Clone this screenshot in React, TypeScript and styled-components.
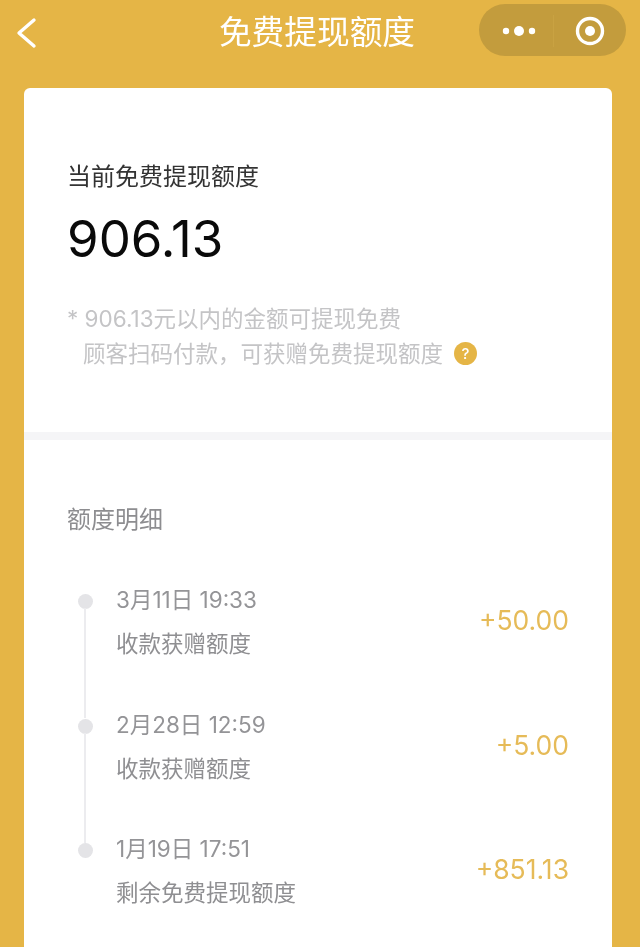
import React from "react";
import styled, { createGlobalStyle } from "styled-components";

const FONT = `Inter, "Noto Sans CJK SC", sans-serif`;
const GOLD = "#e5b546";
const NOTE_TEXT = "顾客扫码付款\uFF0C可获赠免费提现额度";

const Global = createGlobalStyle`
  html, body { margin: 0; padding: 0; background: ${GOLD}; }
  * { box-sizing: border-box; }
`;

const Page = styled.div`
  width: 640px;
  height: 947px;
  overflow: hidden;
  display: flex;
  flex-direction: column;
  background: ${GOLD};
  font-family: ${FONT};
  filter: blur(0.45px);
`;

const NavBar = styled.header`
  height: 88px;
  flex: none;
  display: grid;
  grid-template-columns: 1fr auto 1fr;
  align-items: start;
  padding: 4px 14px 0 16px;
`;

const BackButton = styled.div`
  height: 58px;
  display: flex;
  align-items: center;
  color: #fff;
`;

const Title = styled.h1`
  margin: 0;
  font-size: 32.7px;
  line-height: 57px;
  font-weight: 400;
  color: #fff;
  transform: translateX(-4px);
`;

const Capsule = styled.div`
  justify-self: end;
  width: 147px;
  height: 52px;
  padding-top: 1px;
  border-radius: 26px;
  background: #c39c3d;
  display: grid;
  grid-template-columns: 74px 1px 1fr;
  align-items: center;
  justify-items: center;
`;

const MoreIcon = styled.svg`
  margin-left: 6px;
`;

const CapsuleDivider = styled.span`
  width: 1px;
  height: 32px;
  background: #c9a242;
`;

const Card = styled.main`
  flex: 1;
  margin: 0 28px 0 24px;
  background: #fff;
  border-radius: 6px 6px 0 0;
  display: flex;
  flex-direction: column;
`;

const Summary = styled.section`
  height: 352px;
  flex: none;
  padding: 71px 44px 0 43px;
  border-bottom: 8px solid #f5f5f7;
`;

const SummaryLabel = styled.div`
  font-size: 24px;
  line-height: 36px;
  color: #333;
`;

const SummaryValue = styled.div`
  margin-top: 14px;
  font-size: 51px;
  line-height: 60px;
  color: #0a0a0a;
`;

const Notes = styled.div`
  margin-top: 32px;
  font-size: 22.5px;
  line-height: 35px;
  color: #c4c4c6;
`;

const NoteLine = styled.div`
  display: flex;
  align-items: center;
`;

const NoteIndented = styled(NoteLine)`
  padding-left: 16px;
`;

const HelpBadge = styled.span`
  margin-left: 11px;
  width: 23px;
  height: 23px;
  border-radius: 50%;
  background: ${GOLD};
  color: #fff;
  font-size: 15px;
  font-weight: 500;
  line-height: 23px;
  text-align: center;
`;

const Detail = styled.section`
  padding: 62px 43px 0 43px;
`;

const DetailTitle = styled.div`
  font-size: 24px;
  line-height: 36px;
  color: #8d8d90;
`;

const Timeline = styled.div`
  margin-top: 44px;
  display: flex;
  flex-direction: column;
`;

const Row = styled.div`
  height: 124.5px;
  display: grid;
  grid-template-columns: 49px 1fr auto;
`;

const DotColumn = styled.div`
  position: relative;
`;

const Dot = styled.span<{ $last?: boolean }>`
  position: absolute;
  left: 11px;
  top: 12px;
  width: 15px;
  height: 15px;
  border-radius: 50%;
  background: #e4e4e7;
  &::after {
    content: "";
    display: ${(p) => (p.$last ? "none" : "block")};
    position: absolute;
    left: 6px;
    top: 14px;
    width: 2px;
    height: 110px;
    background: #ececef;
  }
`;

const Texts = styled.div`
  display: flex;
  flex-direction: column;
  gap: 8px;
`;

const DateText = styled.div`
  font-size: 22.5px;
  line-height: 36px;
  color: #949497;
`;

const Reason = styled.div`
  font-size: 22.5px;
  line-height: 36px;
  color: #8f8f92;
`;

const Amount = styled.div`
  font-size: 26.5px;
  line-height: 40px;
  margin-top: 18px;
  color: #e6bb58;
`;

const rows = [
  { date: "3月11日 19:33", reason: "收款获赠额度", amount: "+50.00" },
  { date: "2月28日 12:59", reason: "收款获赠额度", amount: "+5.00" },
  { date: "1月19日 17:51", reason: "剩余免费提现额度", amount: "+851.13" },
];

export default function App() {
  return (
    <Page>
      <Global />
      <NavBar>
        <BackButton>
          <svg width="22" height="32" viewBox="0 0 22 32" fill="none">
            <path d="M18 3 L3 16 L18 29" stroke="#fff" strokeWidth="3.4" strokeLinecap="round" strokeLinejoin="round" />
          </svg>
        </BackButton>
        <Title>免费提现额度</Title>
        <Capsule>
          <MoreIcon width="34" height="12" viewBox="0 0 34 12">
            <circle cx="4" cy="6" r="3.2" fill="#fff" />
            <circle cx="17" cy="6" r="5" fill="#fff" />
            <circle cx="30" cy="6" r="3.2" fill="#fff" />
          </MoreIcon>
          <CapsuleDivider />
          <svg width="30" height="30" viewBox="0 0 30 30">
            <circle cx="15" cy="15" r="12.5" fill="none" stroke="#fff" strokeWidth="3.4" />
            <circle cx="15" cy="15" r="5" fill="#fff" />
          </svg>
        </Capsule>
      </NavBar>
      <Card>
        <Summary>
          <SummaryLabel>当前免费提现额度</SummaryLabel>
          <SummaryValue>906.13</SummaryValue>
          <Notes>
            <NoteLine>* 906.13元以内的金额可提现免费</NoteLine>
            <NoteIndented>
              {NOTE_TEXT}
              <HelpBadge>?</HelpBadge>
            </NoteIndented>
          </Notes>
        </Summary>
        <Detail>
          <DetailTitle>额度明细</DetailTitle>
          <Timeline>
            {rows.map((r, i) => (
              <Row key={r.date}>
                <DotColumn>
                  <Dot $last={i === rows.length - 1} />
                </DotColumn>
                <Texts>
                  <DateText>{r.date}</DateText>
                  <Reason>{r.reason}</Reason>
                </Texts>
                <Amount>{r.amount}</Amount>
              </Row>
            ))}
          </Timeline>
        </Detail>
      </Card>
    </Page>
  );
}
